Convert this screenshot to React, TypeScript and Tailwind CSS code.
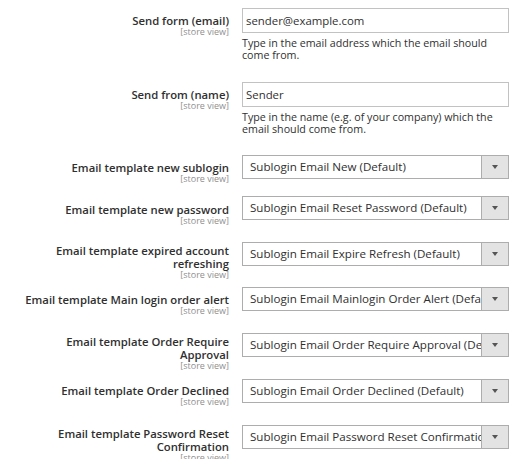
import React from 'react';

type Row = {
  label: string[];
  h: string; // row height, so the next control lands in place
  labelPad: string;
  kind: 'input' | 'select';
  value: string;
  note?: string[];
};

const rows: Row[] = [
  {
    label: ['Send form (email)'],
    h: 'h-[74px]',
    labelPad: 'pt-[6px]',
    kind: 'input',
    value: 'sender@example.com',
    note: ['Type in the email address which the email should', 'come from.'],
  },
  {
    label: ['Send from (name)'],
    h: 'h-[73px]',
    labelPad: 'pt-[6px]',
    kind: 'input',
    value: 'Sender',
    note: ['Type in the name (e.g. of your company) which the', 'email should come from.'],
  },
  { label: ['Email template new sublogin'], h: 'h-[41px]', labelPad: 'pt-[6px]', kind: 'select', value: 'Sublogin Email New (Default)' },
  { label: ['Email template new password'], h: 'h-[46px]', labelPad: 'pt-[7px]', kind: 'select', value: 'Sublogin Email Reset Password (Default)' },
  { label: ['Email template expired account', 'refreshing'], h: 'h-[45px]', labelPad: 'pt-[2px]', kind: 'select', value: 'Sublogin Email Expire Refresh (Default)' },
  { label: ['Email template Main login order alert'], h: 'h-[46px]', labelPad: 'pt-[6px]', kind: 'select', value: 'Sublogin Email Mainlogin Order Alert (Default)' },
  { label: ['Email template Order Require', 'Approval'], h: 'h-[46px]', labelPad: 'pt-[2px]', kind: 'select', value: 'Sublogin Email Order Require Approval (Default)' },
  { label: ['Email template Order Declined'], h: 'h-[46px]', labelPad: 'pt-[5px]', kind: 'select', value: 'Sublogin Email Order Declined (Default)' },
  { label: ['Email template Password Reset', 'Confirmation'], h: 'h-[46px]', labelPad: 'pt-[2px]', kind: 'select', value: 'Sublogin Email Password Reset Confirmation (Default)' },
];

function Field({ row }: { row: Row }) {
  return (
    <div className={`flex shrink-0 ${row.h}`}>
      <div className={`w-[229px] shrink-0 text-right ${row.labelPad}`}>
        {row.label.map((l) => (
          <div key={l} className="text-[11.3px] leading-[13px] font-semibold text-[#303030]">
            {l}
          </div>
        ))}
        <div className="text-[9px] leading-[10px] text-[#8f8f8f]">[store view]</div>
      </div>
      <div className="ml-[13px] w-[267px] shrink-0">
        {row.kind === 'input' ? (
          <div className="h-[25px] border border-[#c2c2c2] bg-white pl-[3px] flex items-center text-[11.4px] text-[#303030]">
            {row.value}
          </div>
        ) : (
          <div className="h-[24px] border border-[#adadad] bg-white flex">
            <div className="flex-1 overflow-hidden whitespace-nowrap pl-[7px] pr-[9px] flex items-center text-[11.6px] text-[#303030]">
              <span>{row.value}</span>
            </div>
            <div className="w-[27px] shrink-0 border-l border-[#adadad] bg-[#e3e3e3] flex items-center justify-center">
              <svg width="6" height="4" viewBox="0 0 6 4">
                <path d="M0 0h6L3 4z" fill="#555" />
              </svg>
            </div>
          </div>
        )}
        {row.note && (
          <div className="mt-[4px] text-[10.7px] leading-[12px] text-[#303030]">
            {row.note.map((n) => (
              <div key={n}>{n}</div>
            ))}
          </div>
        )}
      </div>
    </div>
  );
}

export default function App() {
  return (
    <div className="w-[523px] h-[459px] overflow-hidden bg-white pt-[8px] flex flex-col font-['Open_Sans',sans-serif]">
      {rows.map((r) => (
        <Field key={r.label.join(' ')} row={r} />
      ))}
    </div>
  );
}
